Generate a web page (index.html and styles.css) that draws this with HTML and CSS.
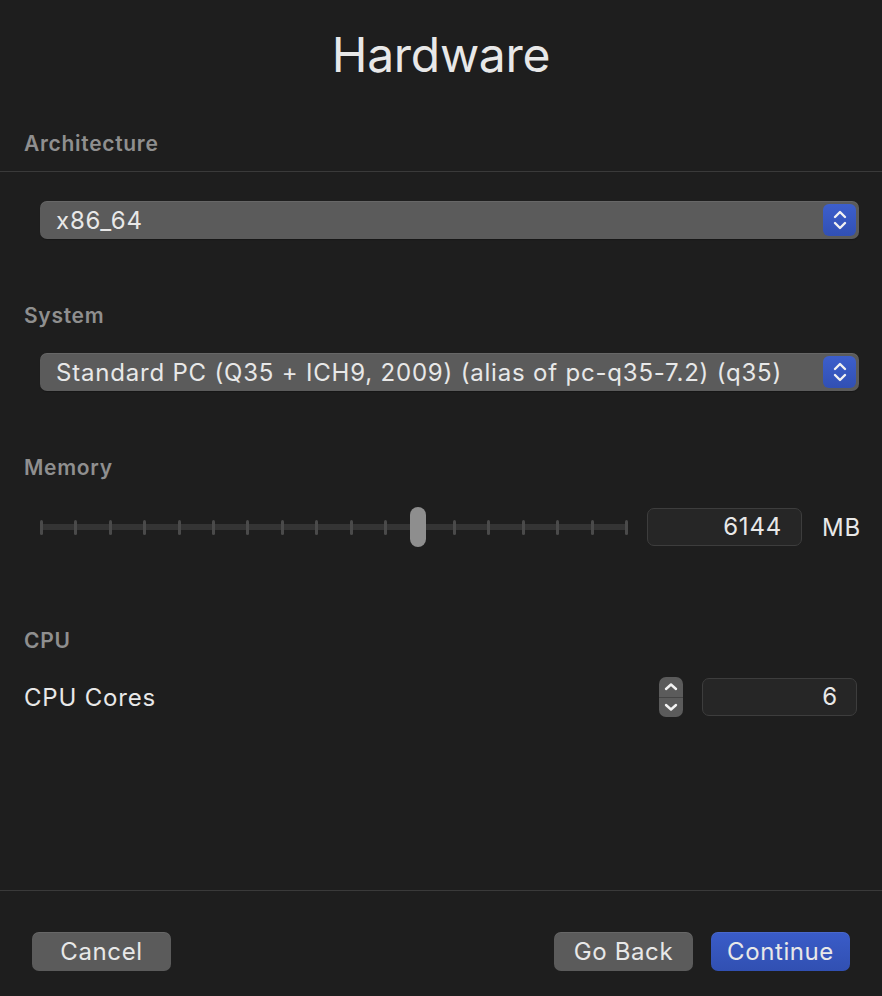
FILE: index.html
```html
<!DOCTYPE html>
<html lang="en">
<head>
<meta charset="utf-8">
<title>Hardware</title>
<link rel="stylesheet" href="styles.css">
</head>
<body>
<div class="page">
  <h1 class="title">Hardware</h1>

  <section class="sec sec-arch">
    <div class="label">Architecture</div>
    <div class="divider"></div>
    <div class="popup popup-arch">
      <span class="popup-text">x86_64</span>
      <span class="popup-btn">
        <svg width="16" height="26" viewBox="0 0 16 26"><path d="M3 10 L8 5 L13 10 M3 16 L8 21 L13 16" fill="none" stroke="#f2f2f2" stroke-width="2.4" stroke-linecap="round" stroke-linejoin="round"/></svg>
      </span>
    </div>
  </section>

  <section class="sec sec-system">
    <div class="label">System</div>
    <div class="popup popup-system">
      <span class="popup-text">Standard PC (Q35 + ICH9, 2009) (alias of pc-q35-7.2) (q35)</span>
      <span class="popup-btn">
        <svg width="16" height="26" viewBox="0 0 16 26"><path d="M3 10 L8 5 L13 10 M3 16 L8 21 L13 16" fill="none" stroke="#f2f2f2" stroke-width="2.4" stroke-linecap="round" stroke-linejoin="round"/></svg>
      </span>
    </div>
  </section>

  <section class="sec sec-memory">
    <div class="label">Memory</div>
    <div class="mem-row">
      <div class="slider">
        <div class="track"></div>
        <div class="ticks">
          <i></i><i></i><i></i><i></i><i></i><i></i><i></i><i></i><i></i><i></i><i></i><i></i><i></i><i></i><i></i><i></i><i></i><i></i>
        </div>
        <div class="thumb"></div>
      </div>
      <div class="field field-mem">6144</div>
      <span class="unit">MB</span>
    </div>
  </section>

  <section class="sec sec-cpu">
    <div class="label">CPU</div>
    <div class="cpu-row">
      <span class="row-label">CPU Cores</span>
      <span class="stepper">
        <span class="step-half">
          <svg width="16" height="12" viewBox="0 0 16 12"><path d="M3 8 L8 3.5 L13 8" fill="none" stroke="#f2f2f2" stroke-width="2.4" stroke-linecap="round" stroke-linejoin="round"/></svg>
        </span>
        <span class="step-half step-down">
          <svg width="16" height="12" viewBox="0 0 16 12"><path d="M3 4 L8 8.5 L13 4" fill="none" stroke="#f2f2f2" stroke-width="2.4" stroke-linecap="round" stroke-linejoin="round"/></svg>
        </span>
      </span>
      <div class="field field-cpu">6</div>
    </div>
  </section>

  <footer class="footer">
    <div class="divider"></div>
    <div class="buttons">
      <button class="btn">Cancel</button>
      <span class="spacer"></span>
      <button class="btn">Go Back</button>
      <button class="btn btn-primary">Continue</button>
    </div>
  </footer>
</div>
</body>
</html>
```

FILE: styles.css
```css
* { box-sizing: border-box; }

html, body {
  margin: 0;
  padding: 0;
  background: #1e1e1e;
}

body {
  font-family: Inter, "Liberation Sans", sans-serif;
  color: #e6e6e6;
}

.page {
  width: 882px;
  height: 996px;
  display: flex;
  flex-direction: column;
  overflow: hidden;
}

.title {
  margin: 26px 0 0;
  font-size: 48px;
  line-height: 58px;
  font-weight: 400;
  text-align: center;
  color: #e8e8e8;
  letter-spacing: -0.3px;
}

.label {
  font-size: 21px;
  line-height: 24px;
  font-weight: 600;
  color: #8f8f8f;
  padding-left: 24px;
  letter-spacing: 0.7px;
}

.divider {
  height: 1px;
  background: #3a3a3a;
}

.sec-arch { margin-top: 48px; }
.sec-arch .divider { margin-top: 15px; }
.sec-arch .popup { margin-top: 29px; }

.sec-system { margin-top: 65px; }
.sec-system .popup { margin-top: 25px; }

.popup {
  margin-left: 40px;
  margin-right: 23px;
  height: 38px;
  background: #5b5b5b;
  border-radius: 7px;
  display: flex;
  align-items: center;
  padding: 0 3px 0 16px;
  box-shadow: inset 0 1px 0 rgba(255,255,255,0.08), 0 1px 1px rgba(0,0,0,0.25);
}

.popup-text {
  flex: 1;
  font-size: 24px;
  letter-spacing: 0.8px;
  color: #e8e8e8;
  white-space: nowrap;
}

.popup-btn {
  width: 33px;
  height: 32px;
  border-radius: 6px;
  background: linear-gradient(#3d5fcc, #3150b4);
  display: flex;
  align-items: center;
  justify-content: center;
}

.sec-memory { margin-top: 65px; }

.mem-row {
  margin-top: 27px;
  display: flex;
  align-items: center;
  padding: 0 0 0 40px;
}

.slider {
  position: relative;
  flex-shrink: 0;
  width: 588px;
  height: 40px;
  display: flex;
  align-items: center;
}

.track {
  position: absolute;
  left: 0;
  right: 0;
  top: 17px;
  height: 6px;
  background: #343434;
}

.ticks {
  position: relative;
  width: 100%;
  display: flex;
  justify-content: space-between;
}

.ticks i {
  display: block;
  width: 3px;
  height: 15px;
  border-radius: 1.5px;
  background: #4a4a4a;
}

.thumb {
  position: absolute;
  left: 370px;
  top: 0;
  width: 16px;
  height: 40px;
  border-radius: 8px;
  background: #8e8e8e;
}

.field {
  flex-shrink: 0;
  height: 38px;
  background: #262626;
  border: 1px solid #3d3d3d;
  border-radius: 7px;
  font-size: 24px;
  letter-spacing: 0.8px;
  line-height: 36px;
  text-align: right;
  color: #e8e8e8;
}

.field-mem {
  width: 155px;
  margin-left: 19px;
  padding-right: 19px;
}

.unit {
  margin-left: 20px;
  font-size: 24px;
  letter-spacing: 0.8px;
  color: #e8e8e8;
  white-space: nowrap;
}

.sec-cpu { margin-top: 82px; }

.cpu-row {
  margin-top: 24px;
  display: flex;
  align-items: center;
  padding: 0 25px 0 24px;
}

.row-label {
  flex: 1;
  font-size: 24px;
  letter-spacing: 0.8px;
  color: #e8e8e8;
}

.stepper {
  flex-shrink: 0;
  width: 24px;
  height: 40px;
  border-radius: 7px;
  background: #5b5b5b;
  display: flex;
  flex-direction: column;
  overflow: hidden;
}

.step-half {
  flex: 1;
  display: flex;
  align-items: center;
  justify-content: center;
}

.step-down {
  border-top: 1px solid #444444;
}

.field-cpu {
  width: 155px;
  margin-left: 19px;
  padding-right: 18px;
}

.footer {
  margin-top: auto;
  padding-bottom: 25px;
}

.footer .divider { margin-bottom: 41px; }

.buttons {
  display: flex;
  align-items: center;
  padding: 0 32px;
  gap: 18px;
}

.spacer { flex: 1; }

.btn {
  width: 139px;
  height: 39px;
  border: none;
  border-radius: 7px;
  background: #5b5b5b;
  color: #e8e8e8;
  font-family: Inter, "Liberation Sans", sans-serif;
  font-size: 24px;
  letter-spacing: 0.6px;
  padding: 0;
  box-shadow: inset 0 1px 0 rgba(255,255,255,0.08);
}

.btn-primary {
  background: linear-gradient(#3a5cc8, #3150b2);
}
```
